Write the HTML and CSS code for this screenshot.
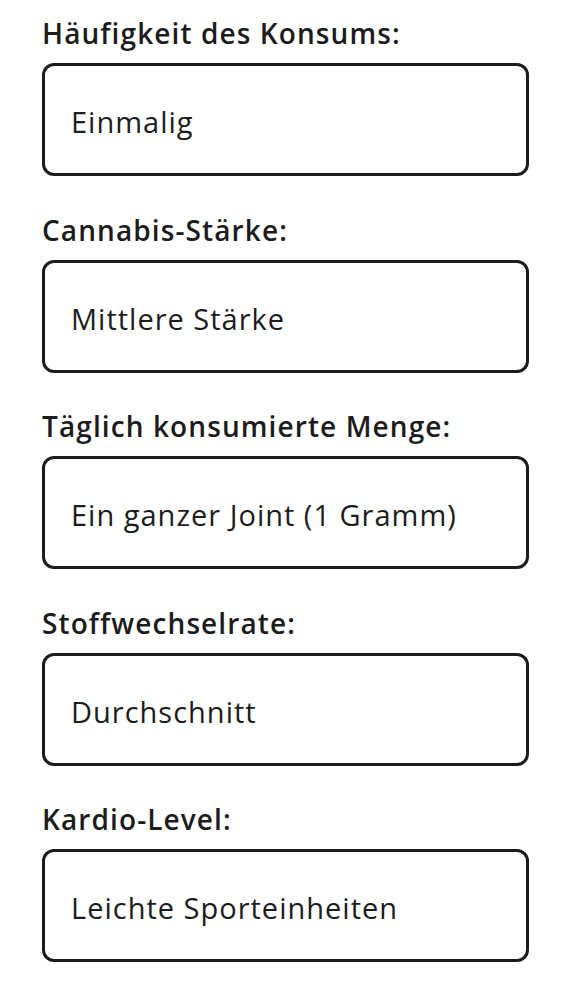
FILE: index.html
```html
<!DOCTYPE html>
<html lang="de">
<head>
<meta charset="utf-8">
<link rel="stylesheet" href="styles.css">
</head>
<body>
<main class="form">
  <div class="field">
    <div class="label">Häufigkeit des Konsums:</div>
    <div class="box">Einmalig</div>
  </div>
  <div class="field">
    <div class="label">Cannabis-Stärke:</div>
    <div class="box">Mittlere Stärke</div>
  </div>
  <div class="field">
    <div class="label">Täglich konsumierte Menge:</div>
    <div class="box">Ein ganzer Joint (1 Gramm)</div>
  </div>
  <div class="field">
    <div class="label">Stoffwechselrate:</div>
    <div class="box">Durchschnitt</div>
  </div>
  <div class="field">
    <div class="label">Kardio-Level:</div>
    <div class="box">Leichte Sporteinheiten</div>
  </div>
</main>
</body>
</html>
```

FILE: styles.css
```css
html, body {
  margin: 0;
  padding: 0;
  background: #ffffff;
}
body {
  font-family: "Open Sans", Lato, sans-serif;
  color: #1c1c1c;
}
.form {
  width: 487px;
  padding: 16px 0 0 42px;
  display: flex;
  flex-direction: column;
  gap: 36.5px;
}
.field {
  display: flex;
  flex-direction: column;
  gap: 13px;
}
.label {
  font-size: 28px;
  line-height: 34px;
  font-weight: 600;
  letter-spacing: 1.1px;
  color: #1c1c1c;
}
.box {
  box-sizing: border-box;
  height: 113px;
  border: 3px solid #1c1c1c;
  border-radius: 12px;
  padding: 4px 26px 0;
  display: flex;
  align-items: center;
  font-size: 29px;
  letter-spacing: 1px;
  color: #1c1c1c;
}
```
